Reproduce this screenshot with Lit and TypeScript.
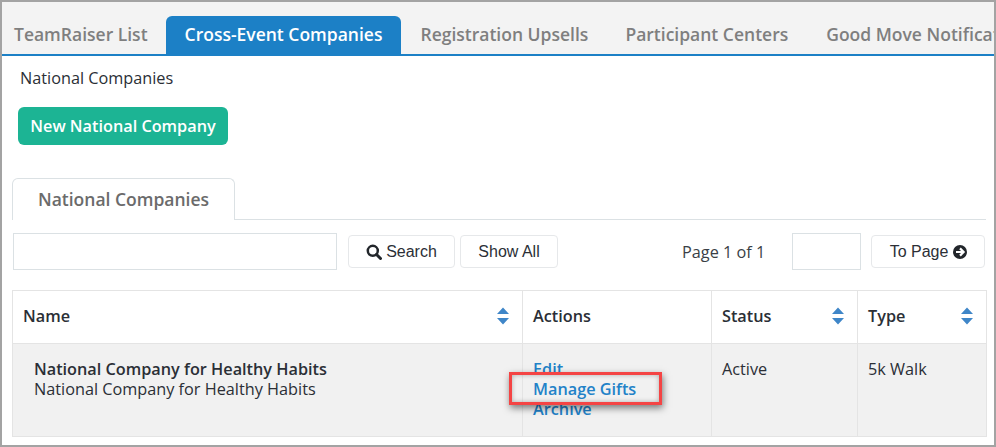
import { LitElement, html, css, svg } from "lit";
import { customElement } from "lit/decorators.js";

const sort = svg`<svg class="sort" width="14" height="20" viewBox="0 0 14 20"><path d="M7 1.5 L13 8 H1 Z M1 12 H13 L7 18.5 Z" fill="#3f86c8"/></svg>`;

@customElement("app-root")
export class AppRoot extends LitElement {
  static styles = css`
    :host { display: block; width: 996px; height: 447px; font-family: "Open Sans", sans-serif; color: #2b2f36; }
    * { box-sizing: border-box; }
    .frame { position: relative; width: 996px; height: 447px; border: 2px solid #a3a3a3; overflow: hidden; background: #fff; }
    .tabs { display: flex; height: 38px; padding: 14px 0 0 0; background: #f3f3f3; border-bottom: 2px solid #1c80c6; box-sizing: content-box; white-space: nowrap; overflow: hidden; }
    .tab { font-size: 17.5px; font-weight: 600; color: #7f7f7f; padding: 0 19px; height: 38px; line-height: 36px; flex: none; }
    .tab.first { padding: 0 18px 0 12px; }
    .tab.tight { padding-right: 18px; }
    .tab.active { background: #1c80c6; color: #fff; border-radius: 6px 6px 0 0; }
    .crumb { font-size: 16.25px; line-height: 22px; margin: 11px 0 0 18px; color: #2b2f36; }
    .primary { display: block; margin: 18px 0 0 16px; width: 210px; height: 38px; border-radius: 6px; border: 0; background: #1cb494; color: #fff; font: 600 16.25px/38px "Open Sans", sans-serif; padding: 0; text-align: center; }
    .subtabs { display: flex; margin: 33px 8px 0 10px; height: 42px; border-bottom: 1px solid #dbe1e4; }
    .subtab { width: 223px; height: 42px; border: 1px solid #dbe1e4; border-bottom: 0; border-radius: 6px 6px 0 0; background: #fff; text-align: center; font-size: 17.5px; font-weight: 600; line-height: 41px; color: #6b6b6b; }
    .tools { display: flex; align-items: center; margin: 13px 0 0 11px; height: 37px; }
    .field { height: 37px; border: 1px solid #dbe1e4; background: #fff; flex: none; }
    .field.q { width: 324px; margin-right: 11px; }
    .field.p { width: 69px; margin-right: 10px; }
    .btn { height: 33px; border: 1px solid #e6e8ea; border-radius: 4px; background: #fff; font: 16px/31px "Liberation Sans", sans-serif; color: #2b2f36; display: flex; align-items: center; justify-content: center; gap: 4px; flex: none; }
    .btn.search { width: 107px; margin-right: 5px; }
    .btn.all { width: 98px; margin-right: 124px; }
    .btn.go { width: 114px; gap: 5px; padding-left: 1px; }
    .pg { font-size: 16.25px; width: 110px; flex: none; color: #3a3f46; }
    table { border-collapse: collapse; table-layout: fixed; width: 974px; margin: 20px 0 0 10px; font-size: 16.25px; }
    th, td { border: 1px solid #e4e4e4; vertical-align: top; text-align: left; padding: 0 10px; }
    th { height: 53px; font-weight: 600; vertical-align: middle; background: #fff; padding-bottom: 2px; }
    th .h { display: flex; justify-content: space-between; align-items: center; padding-right: 2.5px; }
    td { height: 93px; background: #f1f1f1; padding-top: 15px; line-height: 20px; }
    td.name { padding-left: 21px; }
    .bold { font-weight: 600; }
    a { display: block; color: #2282c8; font-weight: 600; text-decoration: none; }
    .mark { position: absolute; left: 507px; top: 370px; width: 153px; height: 33px; border: 3px solid #f44444; box-shadow: 1px 3px 7px rgba(0,0,0,.5), inset 0 0 5px rgba(0,0,0,.28); }
    .sort { flex: none; }
  `;

  render() {
    return html`<div class="frame">
      <div class="tabs">
        <div class="tab first">TeamRaiser List</div>
        <div class="tab active">Cross-Event Companies</div>
        <div class="tab tight">Registration Upsells</div>
        <div class="tab">Participant Centers</div>
        <div class="tab">Good Move Notifications</div>
      </div>
      <div class="crumb">National Companies</div>
      <button class="primary">New National Company</button>
      <div class="subtabs"><div class="subtab">National Companies</div></div>
      <div class="tools">
        <div class="field q"></div>
        <div class="btn search">
          <svg width="16" height="16" viewBox="0 0 16 16"><circle cx="6.8" cy="6.8" r="5" fill="none" stroke="#22262b" stroke-width="2.5"/><path d="M10.5 10.5 L14.5 14.5" stroke="#22262b" stroke-width="3" stroke-linecap="round"/></svg>
          Search
        </div>
        <div class="btn all">Show All</div>
        <div class="pg">Page 1 of 1</div>
        <div class="field p"></div>
        <div class="btn go">To Page
          <svg width="14" height="14" viewBox="0 0 14 14"><circle cx="7" cy="7" r="7" fill="#22262b"/><path d="M3 7 H10 M7 3.4 L10.6 7 L7 10.6" fill="none" stroke="#fff" stroke-width="2.2"/></svg>
        </div>
      </div>
      <table>
        <colgroup><col style="width:510px"/><col style="width:189px"/><col style="width:146px"/><col style="width:129px"/></colgroup>
        <thead><tr>
          <th><div class="h">Name ${sort}</div></th>
          <th>Actions</th>
          <th><div class="h">Status ${sort}</div></th>
          <th><div class="h">Type ${sort}</div></th>
        </tr></thead>
        <tbody><tr>
          <td class="name"><div class="bold">National Company for Healthy Habits</div><div>National Company for Healthy Habits</div></td>
          <td><a>Edit</a><a>Manage Gifts</a><a>Archive</a></td>
          <td>Active</td>
          <td>5k Walk</td>
        </tr></tbody>
      </table>
      <div class="mark"></div>
    </div>`;
  }
}
